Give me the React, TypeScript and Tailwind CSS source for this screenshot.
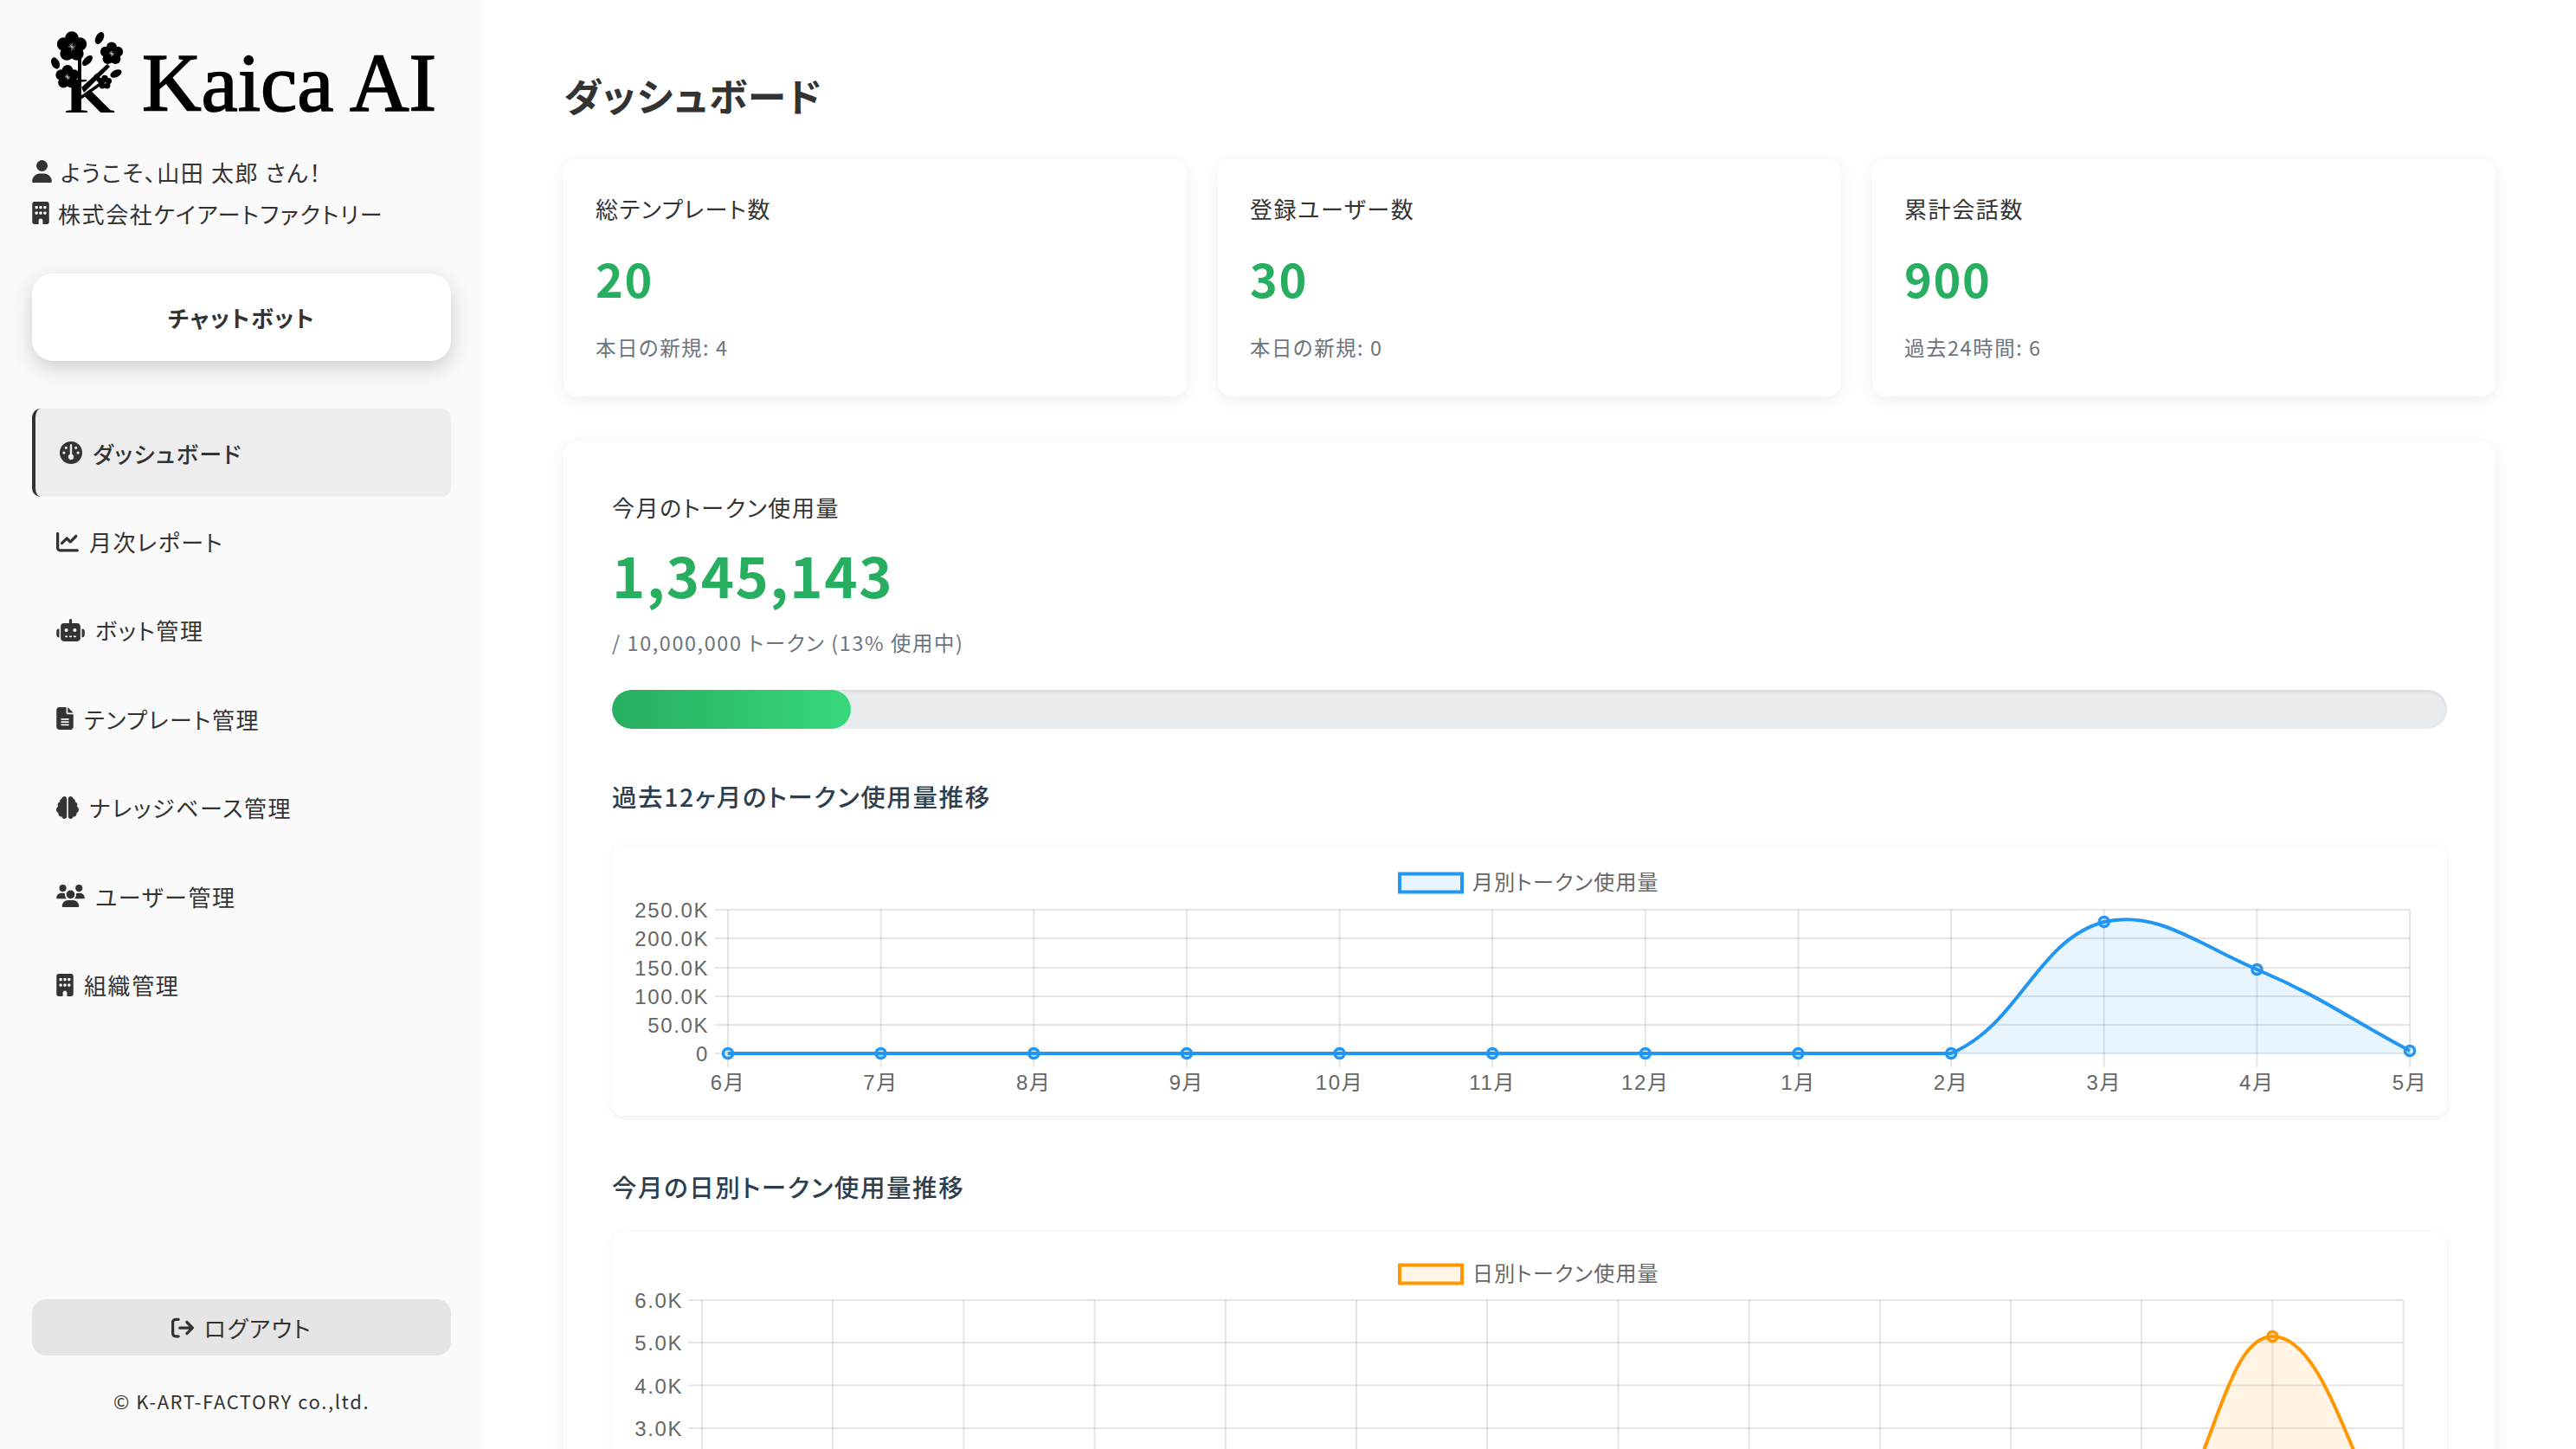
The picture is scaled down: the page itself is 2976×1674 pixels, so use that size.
import {
  FaUser,
  FaBuilding,
  FaGauge,
  FaChartLine,
  FaRobot,
  FaFileLines,
  FaBrain,
  FaUsers,
  FaArrowRightFromBracket,
} from 'react-icons/fa6';

type Pt = { x: number; y: number };

const navItems = [
  { label: 'ダッシュボード', icon: FaGauge, iconClass: 'w-[26px]', active: true },
  { label: '月次レポート', icon: FaChartLine, iconClass: 'w-[26px]' },
  { label: 'ボット管理', icon: FaRobot, iconClass: 'w-[33px]' },
  { label: 'テンプレート管理', icon: FaFileLines, iconClass: 'w-[20px]' },
  { label: 'ナレッジベース管理', icon: FaBrain, iconClass: 'w-[26px]' },
  { label: 'ユーザー管理', icon: FaUsers, iconClass: 'w-[33px]' },
  { label: '組織管理', icon: FaBuilding, iconClass: 'w-[20px]' },
];

const stats = [
  { label: '総テンプレート数', value: '20', sub: '本日の新規: 4' },
  { label: '登録ユーザー数', value: '30', sub: '本日の新規: 0' },
  { label: '累計会話数', value: '900', sub: '過去24時間: 6' },
];

// same control points as a line chart with tension 0.4, capped to the plot area
function splinePath(pts: Pt[], top: number, bottom: number) {
  const t = 0.4;
  const cap = (y: number) => Math.min(bottom, Math.max(top, y));
  const ctrl = pts.map((p, i) => {
    const prev = pts[i - 1] ?? p;
    const next = pts[i + 1] ?? p;
    const d01 = Math.hypot(p.x - prev.x, p.y - prev.y);
    const d12 = Math.hypot(next.x - p.x, next.y - p.y);
    const sum = d01 + d12 || 1;
    const a = (t * d01) / sum;
    const b = (t * d12) / sum;
    return {
      inX: p.x - a * (next.x - prev.x),
      inY: cap(p.y - a * (next.y - prev.y)),
      outX: p.x + b * (next.x - prev.x),
      outY: cap(p.y + b * (next.y - prev.y)),
    };
  });
  let d = `M${pts[0].x} ${pts[0].y}`;
  for (let i = 1; i < pts.length; i++) {
    d += ` C${ctrl[i - 1].outX} ${ctrl[i - 1].outY} ${ctrl[i].inX} ${ctrl[i].inY} ${pts[i].x} ${pts[i].y}`;
  }
  return d;
}

function Flower({ cx, cy, r }: { cx: number; cy: number; r: number }) {
  const petals = [0, 1, 2, 3, 4].map((i) => {
    const a = -Math.PI / 2 + (i * 2 * Math.PI) / 5;
    return { x: cx + Math.cos(a) * r * 0.58, y: cy + Math.sin(a) * r * 0.58 };
  });
  return (
    <g>
      {petals.map((p, i) => (
        <circle key={i} cx={p.x} cy={p.y} r={r * 0.46} fill="#000" />
      ))}
      <circle cx={cx} cy={cy} r={r * 0.5} fill="#000" />
      <path
        d={`M${cx} ${cy - r * 0.25}V${cy + r * 0.25}M${cx - r * 0.22} ${cy}H${cx + r * 0.22}M${cx - r * 0.16} ${cy - r * 0.16}L${cx + r * 0.16} ${cy + r * 0.16}`}
        stroke="#fff"
        strokeWidth="0.7"
      />
    </g>
  );
}

function LogoMark() {
  return (
    <svg width="92" height="100" viewBox="52 33 92 100" className="block shrink-0 overflow-visible">
      <Flower cx={81} cy={53} r={17} />
      <Flower cx={127} cy={61} r={13} />
      <Flower cx={76} cy={88} r={13.5} />
      <Flower cx={119} cy={94} r={8} />
      <ellipse cx={113} cy={43} rx={4.5} ry={7.5} transform="rotate(28 113 43)" fill="#000" />
      <ellipse cx={62} cy={72} rx={4.5} ry={7} transform="rotate(-25 62 72)" fill="#000" />
      <ellipse cx={99} cy={69} rx={4} ry={7.5} transform="rotate(45 99 69)" fill="#000" />
      <ellipse cx={132} cy={84} rx={4} ry={7} transform="rotate(65 132 84)" fill="#000" />
      <path d="M88 62h4v35h-4zM92 100L122 73l3 3-30 30zM109 84l8 8-3 3-8-8z" fill="#000" />
      <text
        x={0}
        y={129}
        fontSize={58}
        letterSpacing={0}
        fontFamily="'Liberation Serif', serif"
        fontWeight={700}
        transform="translate(73 0) scale(1.28 1)"
      >
        K
      </text>
    </svg>
  );
}

function Sidebar() {
  return (
    <aside className="flex h-full w-[558px] shrink-0 flex-col bg-[#fafafa] px-[37px] text-[#333]">
      <div className="mt-[34px] flex h-[100px] items-center justify-center gap-[18px]">
        <LogoMark />
        <span className="mt-[24px] font-['Liberation_Serif',serif] text-[95px] leading-none tracking-normal text-black [-webkit-text-stroke:1.6px_black]">
          Kaica AI
        </span>
      </div>

      <div className="mt-[40px] flex h-[48px] items-center gap-[10px] text-[26px]">
        <FaUser className="h-[26px] w-[23px]" />
        <span>ようこそ、山田 太郎 さん！</span>
      </div>
      <div className="flex h-[48px] items-center gap-[10px] text-[26px]">
        <FaBuilding className="h-[26px] w-[20px]" />
        <span>株式会社ケイアートファクトリー</span>
      </div>

      <button className="mt-[46px] h-[101px] w-full rounded-[24px] bg-white text-[26px] font-bold shadow-[0_8px_24px_rgba(0,0,0,0.18)]">
        チャットボット
      </button>

      <nav className="mt-[55px] flex flex-col">
        {navItems.map((item) => (
          <a
            key={item.label}
            className={`flex h-[102.4px] items-center gap-[12px] rounded-[10px] pl-[28px] text-[26px] ${
              item.active ? 'border-l-[4px] border-[#333] bg-[#ededed] font-medium' : ''
            }`}
          >
            <item.icon className={`h-[26px] shrink-0 ${item.iconClass}`} />
            <span>{item.label}</span>
          </a>
        ))}
      </nav>

      <button className="mt-auto flex h-[65px] w-full items-center justify-center gap-[12px] rounded-[16px] bg-[#e5e5e5] text-[26px]">
        <FaArrowRightFromBracket className="h-[26px] w-[26px]" />
        ログアウト
      </button>
      <p className="mt-[36px] mb-[40px] text-center text-[22px] leading-[32px]">© K-ART-FACTORY co.,ltd.</p>
    </aside>
  );
}

function StatCard({ label, value, sub }: { label: string; value: string; sub: string }) {
  return (
    <div className="h-[274px] rounded-[16px] bg-white px-[37px] pt-[37px] shadow-[0_4px_20px_rgba(0,0,0,0.07)]">
      <p className="text-[26px] leading-[40px] text-[#333]">{label}</p>
      <p className="mt-[22px] text-[54px] leading-[76px] font-bold text-[#27ae60]">{value}</p>
      <p className="mt-[24px] text-[23.4px] leading-[36px] text-[#6c757d]">{sub}</p>
    </div>
  );
}

const chartFont = "'Liberation Sans', 'Noto Sans CJK JP', sans-serif";

type ChartProps = {
  height: number;
  top: number;
  bottom: number;
  left: number;
  right: number;
  tickLeft: number;
  labelRight: number;
  yTicks: { label: string; y: number }[];
  xs: number[];
  xLabels?: string[];
  values: number[];
  color: string;
  fill: string;
  legend: string;
  legendY: number;
};

// coordinates are relative to the chart card
function LineChart(props: ChartProps) {
  const { height, top, bottom, left, right, tickLeft, labelRight, yTicks, xs, xLabels, values, color, fill, legend, legendY } = props;
  const pts = xs.map((x, i) => ({ x, y: values[i] }));
  const line = splinePath(pts, top, bottom);
  const grid = 'rgba(0,0,0,0.1)';
  return (
    <svg width={2121} height={height} viewBox={`0 0 2121 ${height}`} className="block" fontFamily={chartFont}>
      <rect x={910} y={legendY - 10.5} width={72} height={21} fill={fill} stroke={color} strokeWidth={4} />
      <text x={994} y={legendY + 8} fontSize={24} letterSpacing={1.2} fill="#666">
        {legend}
      </text>

      {yTicks.map((t) => (
        <g key={t.label}>
          <line x1={tickLeft} x2={right} y1={t.y} y2={t.y} stroke={grid} strokeWidth={2} />
          <text x={labelRight + 2} y={t.y + 9} textAnchor="end" fontSize={24} letterSpacing={1.6} fill="#666">
            {t.label}
          </text>
        </g>
      ))}
      {xs.map((x, i) => (
        <g key={x}>
          <line x1={x} x2={x} y1={top} y2={bottom + 16} stroke={grid} strokeWidth={2} />
          {xLabels && (
            <text x={x} y={bottom + 42} textAnchor="middle" fontSize={24} letterSpacing={1.6} fill="#666">
              {xLabels[i]}
            </text>
          )}
        </g>
      ))}

      <path d={`${line} L${xs[xs.length - 1]} ${bottom} L${left} ${bottom} Z`} fill={fill} />
      <path d={line} fill="none" stroke={color} strokeWidth={4} />
      {pts.map((p) => (
        <circle key={p.x} cx={p.x} cy={p.y} r={5.5} fill={fill} stroke={color} strokeWidth={3.5} />
      ))}
    </svg>
  );
}

const monthLabels = ['6月', '7月', '8月', '9月', '10月', '11月', '12月', '1月', '2月', '3月', '4月', '5月'];
const monthXs = monthLabels.map((_, i) => 134 + i * 176.64);
const monthBase = 240;
const monthValues = monthLabels.map((_, i) => (i === 9 ? 88 : i === 10 ? 143 : i === 11 ? 237 : monthBase));

const dayXs = Array.from({ length: 14 }, (_, i) => 104 + i * 151.2);
const dayBase = 375;
const dayValues = dayXs.map((_, i) => (i === 12 ? 121 : dayBase));

function Main() {
  return (
    <main className="h-full min-w-0 flex-1 overflow-hidden px-[93px] pt-[82px]">
      <h1 className="text-[44.8px] leading-[56px] font-bold text-[#333]">ダッシュボード</h1>

      <div className="mt-[46px] grid grid-cols-3 gap-[36px]">
        {stats.map((s) => (
          <StatCard key={s.label} {...s} />
        ))}
      </div>

      <section className="mt-[52px] rounded-[16px] bg-white px-[56px] pt-[56px] pb-[40px] shadow-[0_4px_20px_rgba(0,0,0,0.07)]">
        <p className="text-[26px] leading-[40px] text-[#333]">今月のトークン使用量</p>
        <p className="mt-[14px] text-[65px] leading-[86px] font-bold text-[#27ae60]">1,345,143</p>
        <p className="mt-[18px] text-[23.4px] leading-[36px] text-[#6c757d]">/ 10,000,000 トークン (13% 使用中)</p>

        <div className="mt-[37px] h-[45px] overflow-hidden rounded-full bg-[#e9ecef] shadow-[inset_0_2px_4px_rgba(0,0,0,0.08)]">
          <div className="h-full w-[13%] rounded-full bg-gradient-to-r from-[#27ae60] to-[#38d87b]" />
        </div>

        <h3 className="mt-[56px] text-[28.5px] leading-[44px] font-medium text-[#2c3e50]">過去12ヶ月のトークン使用量推移</h3>
        <div className="mt-[35px] rounded-[12px] bg-white shadow-[0_2px_8px_rgba(0,0,0,0.07)]">
          <LineChart
            height={312}
            top={74}
            bottom={240}
            left={134}
            right={2077}
            tickLeft={119}
            labelRight={110}
            yTicks={[
              { label: '250.0K', y: 74 },
              { label: '200.0K', y: 107 },
              { label: '150.0K', y: 141 },
              { label: '100.0K', y: 174 },
              { label: '50.0K', y: 207 },
              { label: '0', y: 240 },
            ]}
            xs={monthXs}
            xLabels={monthLabels}
            values={monthValues}
            color="#2196f3"
            fill="rgba(33,150,243,0.1)"
            legend="月別トークン使用量"
            legendY={43}
          />
        </div>

        <h3 className="mt-[60px] text-[28.5px] leading-[44px] font-medium text-[#2c3e50]">今月の日別トークン使用量推移</h3>
        <div className="mt-[30px] rounded-[12px] bg-white shadow-[0_2px_8px_rgba(0,0,0,0.07)]">
          <LineChart
            height={460}
            top={79}
            bottom={375}
            left={104}
            right={2069}
            tickLeft={88}
            labelRight={80}
            yTicks={[
              { label: '6.0K', y: 79 },
              { label: '5.0K', y: 128 },
              { label: '4.0K', y: 177.5 },
              { label: '3.0K', y: 227 },
              { label: '2.0K', y: 276 },
              { label: '1.0K', y: 326 },
              { label: '0', y: 375 },
            ]}
            xs={dayXs}
            values={dayValues}
            color="#ff9800"
            fill="rgba(255,152,0,0.1)"
            legend="日別トークン使用量"
            legendY={49}
          />
        </div>
      </section>
    </main>
  );
}

export default function App() {
  return (
    <div className="flex h-screen overflow-hidden bg-white font-['Noto_Sans_CJK_JP',sans-serif] tracking-[1.6px] [font-feature-settings:'palt']">
      <Sidebar />
      <Main />
    </div>
  );
}
